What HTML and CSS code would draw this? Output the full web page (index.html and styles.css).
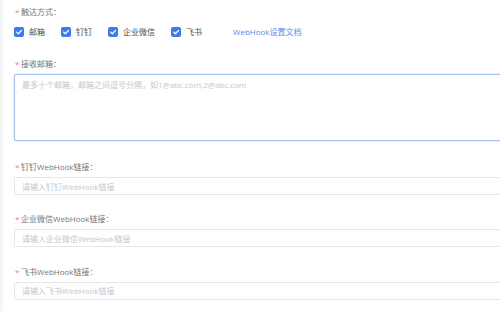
FILE: index.html
```html
<!DOCTYPE html>
<html lang="zh-CN">
<head>
<meta charset="utf-8">
<link rel="stylesheet" href="styles.css">
</head>
<body>
<div class="page">
  <div class="item item-first">
    <div class="label"><span class="req">*</span>触达方式：</div>
    <div class="checks">
      <label class="check"><span class="box"><svg viewBox="0 0 10 10" width="10" height="10"><path d="M2.6 5.1 L4.3 6.7 L7.5 3.5" fill="none" stroke="#fff" stroke-width="1.3" stroke-linecap="round" stroke-linejoin="round"/></svg></span>邮箱</label>
      <label class="check"><span class="box"><svg viewBox="0 0 10 10" width="10" height="10"><path d="M2.6 5.1 L4.3 6.7 L7.5 3.5" fill="none" stroke="#fff" stroke-width="1.3" stroke-linecap="round" stroke-linejoin="round"/></svg></span>钉钉</label>
      <label class="check"><span class="box"><svg viewBox="0 0 10 10" width="10" height="10"><path d="M2.6 5.1 L4.3 6.7 L7.5 3.5" fill="none" stroke="#fff" stroke-width="1.3" stroke-linecap="round" stroke-linejoin="round"/></svg></span>企业微信</label>
      <label class="check"><span class="box"><svg viewBox="0 0 10 10" width="10" height="10"><path d="M2.6 5.1 L4.3 6.7 L7.5 3.5" fill="none" stroke="#fff" stroke-width="1.3" stroke-linecap="round" stroke-linejoin="round"/></svg></span>飞书</label>
      <a class="link">WebHook设置文档</a>
    </div>
  </div>
  <div class="item item-area">
    <div class="label"><span class="req">*</span>接收邮箱：</div>
    <div class="textarea"><span class="ph">最多十个邮箱，邮箱之间逗号分隔，如1@abc.com,2@abc.com</span></div>
  </div>
  <div class="item">
    <div class="label"><span class="req">*</span>钉钉WebHook链接：</div>
    <div class="input"><span class="ph">请输入钉钉WebHook链接</span></div>
  </div>
  <div class="item">
    <div class="label"><span class="req">*</span>企业微信WebHook链接：</div>
    <div class="input"><span class="ph">请输入企业微信WebHook链接</span></div>
  </div>
  <div class="item">
    <div class="label"><span class="req">*</span>飞书WebHook链接：</div>
    <div class="input"><span class="ph">请输入飞书WebHook链接</span></div>
  </div>
</div>
</body>
</html>
```

FILE: styles.css
```css
html, body {
  margin: 0;
  padding: 0;
  background: #f4f5f7;
  overflow: hidden;
  width: 500px;
  height: 311px;
}
body {
  font-family: "Open Sans", "Noto Sans CJK SC", sans-serif;
  font-size: 8px;
}
.page {
  margin-left: 3px;
  background: #fff;
  height: 311px;
  width: 497px;
  overflow: hidden;
  padding: 6px 0 0 11px;
  box-sizing: border-box;
  display: flex;
  flex-direction: column;
}
.item {
  display: flex;
  flex-direction: column;
  gap: 4px;
  margin-bottom: 18.4px;
  width: 560px;
  flex-shrink: 0;
}
.item-first {
  gap: 8px;
  margin-bottom: 20px;
}
.item-area {
  margin-bottom: 20px;
}
.label {
  height: 12px;
  line-height: 12px;
  color: #72757b;
  display: flex;
  align-items: center;
}
.req {
  color: #f27a7a;
  width: 7px;
  font-size: 8px;
  padding-left: 1px;
  box-sizing: border-box;
}
.checks {
  height: 12px;
  display: flex;
  align-items: center;
}
.check {
  display: flex;
  align-items: center;
  gap: 5px;
  margin-right: 16px;
  color: #4a4d52;
  line-height: 12px;
}
.box {
  width: 10px;
  height: 10px;
  border-radius: 2px;
  background: #3a7bf2;
  display: block;
}
.box svg {
  display: block;
}
.link {
  margin-left: 15px;
  color: #5b8cf2;
  line-height: 12px;
}
.textarea {
  height: 67px;
  border: 1px solid #a6c3f6;
  box-shadow: 0 0 0 0.5px #d6e4fc;
  border-radius: 2px;
  box-sizing: border-box;
  padding: 4px 7px;
  line-height: 12px;
  background: #fff;
}
.input {
  height: 18px;
  border: 1px solid #e4e5e8;
  border-radius: 2px;
  box-sizing: border-box;
  padding: 0 7px;
  display: flex;
  align-items: center;
  background: #fff;
}
.ph {
  color: #c3c6cc;
}
```
